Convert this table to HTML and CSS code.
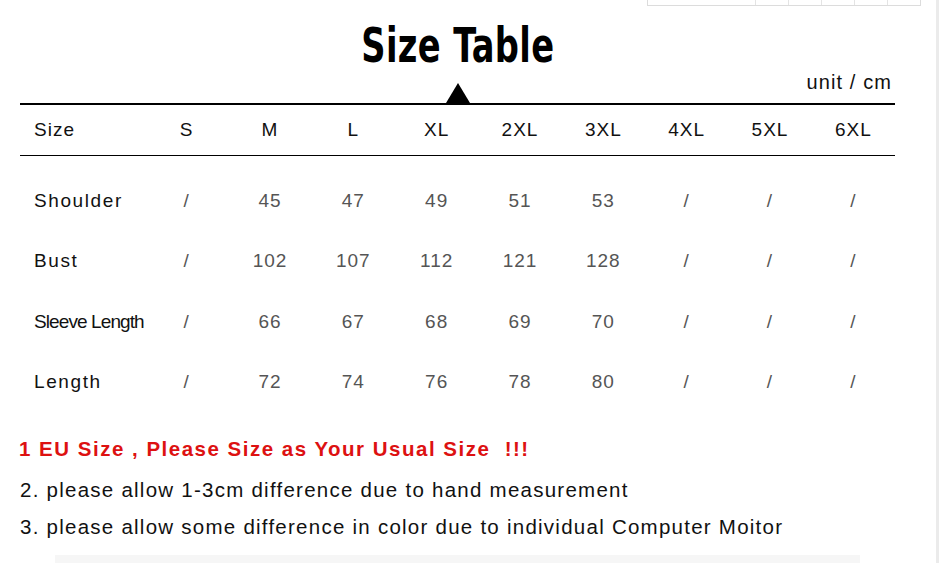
FILE: index.html
```html
<!DOCTYPE html>
<html>
<head>
<meta charset="utf-8">
<link rel="stylesheet" href="styles.css">
</head>
<body>
<div class="frame">
  <div class="top-box">
    <span class="tb-cell tb-wide"></span><span class="tb-cell"></span><span class="tb-cell"></span><span class="tb-cell"></span><span class="tb-cell"></span><span class="tb-cell"></span>
  </div>
  <div class="page">
    <header class="head">
      <h1 class="title"><span class="title-text">Size Table</span></h1>
      <div class="unit">unit / cm</div>
    </header>
    <div class="rule"></div>
    <div class="grid hrow">
      <div class="label">Size</div>
      <div>S</div><div>M</div><div>L</div><div>XL</div><div>2XL</div><div>3XL</div><div>4XL</div><div>5XL</div><div>6XL</div>
    </div>
    <div class="body-rows">
      <div class="grid drow">
        <div class="label">Shoulder</div>
        <div>/</div><div>45</div><div>47</div><div>49</div><div>51</div><div>53</div><div>/</div><div>/</div><div>/</div>
      </div>
      <div class="grid drow">
        <div class="label">Bust</div>
        <div>/</div><div>102</div><div>107</div><div>112</div><div>121</div><div>128</div><div>/</div><div>/</div><div>/</div>
      </div>
      <div class="grid drow">
        <div class="label label-tight">Sleeve Length</div>
        <div>/</div><div>66</div><div>67</div><div>68</div><div>69</div><div>70</div><div>/</div><div>/</div><div>/</div>
      </div>
      <div class="grid drow">
        <div class="label">Length</div>
        <div>/</div><div>72</div><div>74</div><div>76</div><div>78</div><div>80</div><div>/</div><div>/</div><div>/</div>
      </div>
    </div>
    <div class="notes">
      <p class="note red">1 EU Size , Please Size as Your Usual Size &nbsp;!!!</p>
      <p class="note">2. please allow 1-3cm difference due to hand measurement</p>
      <p class="note">3. please allow some difference in color due to individual Computer Moitor</p>
    </div>
    <div class="shadow"></div>
  </div>
  <div class="edge"></div>
</div>
</body>
</html>
```
FILE: styles.css
```css
* { box-sizing: border-box; }
html, body { margin: 0; padding: 0; background: #fff; }
body { font-family: "Liberation Sans", Arial, sans-serif; color: #111; }

.frame { position: relative; width: 940px; height: 563px; overflow: hidden; }

.top-box {
  position: absolute; left: 647px; top: -4px; width: 274px; height: 10px;
  border: 1px solid #dcdcdc; display: flex;
}
.tb-cell { border-left: 1px solid #e4e4e4; flex: 0 0 33px; }
.tb-wide { border-left: none; flex: 1 1 auto; }

.edge { position: absolute; right: 1px; top: 0; width: 3px; height: 563px; background: #ebebeb; }

.page { width: 895px; padding-left: 20px; }

.head { height: 103px; position: relative; }
.title {
  margin: 0; padding-top: 20px; text-align: center; line-height: 50px; height: 70px;
  font-family: "DejaVu Sans Condensed", "DejaVu Sans", sans-serif; font-stretch: condensed;
  font-weight: 900; font-size: 48px; color: #000;
}
.title-text { display: inline-block; transform: scaleX(0.78); letter-spacing: 0.5px; }
.unit {
  text-align: right; padding-right: 3px; font-size: 20px; letter-spacing: 1.1px; line-height: 24px;
  color: #111;
}

.rule { height: 2px; background: #000; position: relative; }
.rule::before {
  content: ""; position: absolute; left: 426px; top: -20px;
  border-left: 12px solid transparent; border-right: 12px solid transparent;
  border-bottom: 20px solid #000;
}

.grid { display: grid; grid-template-columns: 125px repeat(9, 1fr); align-items: center; text-align: center; }
.hrow { height: 51px; border-bottom: 1.5px solid #000; font-size: 19px; letter-spacing: 1px; color: #111; }
.label { text-align: left; padding-left: 14px; color: #111; }
.body-rows { padding-top: 15px; }
.drow { height: 60.3px; font-size: 19px; letter-spacing: 1px; color: #555; }
.drow .label { letter-spacing: 1.6px; color: #111; }
.drow .label.label-tight { letter-spacing: -0.9px; font-size: 19px; white-space: nowrap; }

.notes { padding-top: 18px; }
.note { margin: 0; font-size: 20.5px; letter-spacing: 1.25px; line-height: 37px; color: #111; white-space: nowrap; }
.note.red { color: #dd1111; font-weight: bold; letter-spacing: 1.5px; margin-left: -1px; margin-bottom: 4px; }

.shadow { margin: 10px 0 0 35px; width: 805px; height: 8px; background: #f6f6f6; }
```
